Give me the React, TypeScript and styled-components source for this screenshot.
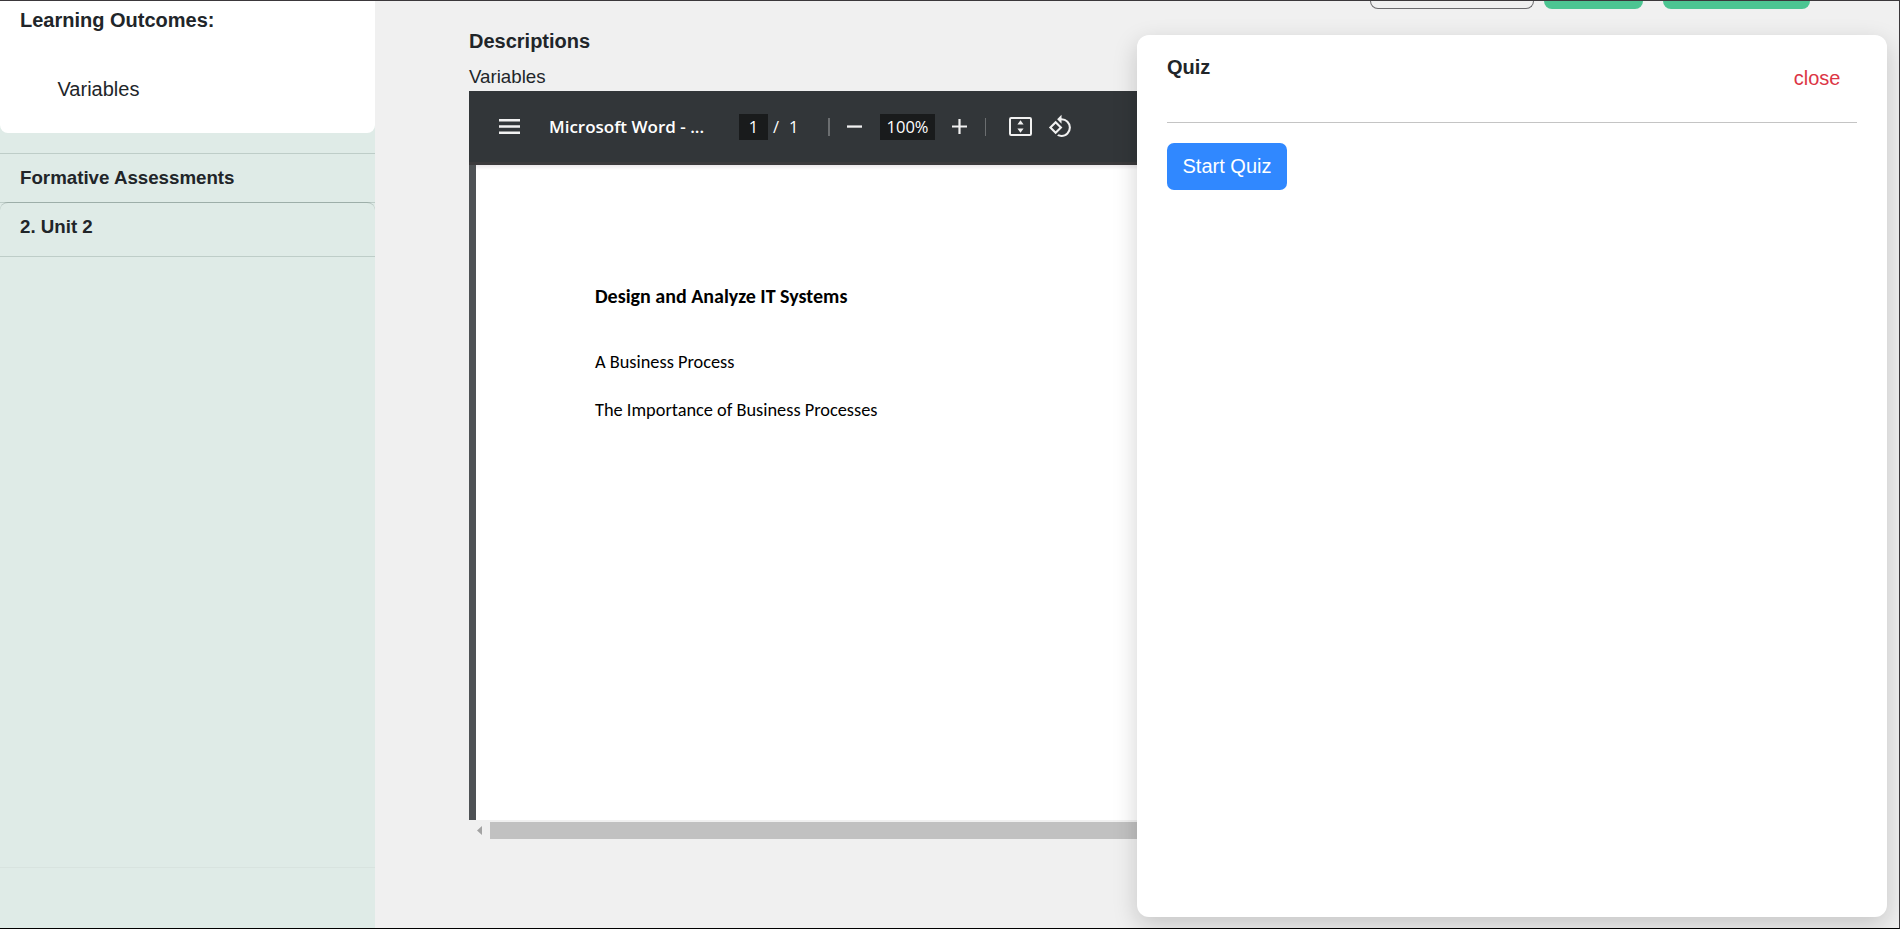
import React from "react";
import styled, { createGlobalStyle } from "styled-components";
import { MdRotate90DegreesCcw } from "react-icons/md";

const GlobalStyle = createGlobalStyle`
  *, *::before, *::after { box-sizing: border-box; }
  body {
    margin: 0;
    font-family: Arial, "Liberation Sans", sans-serif;
    font-size: 20px;
    line-height: 24px;
    color: #212529;
    background: #f0f0f0;
  }
  h1, h2, h3, p { margin: 0; }
`;

const Page = styled.div`
  position: relative;
  display: flex;
  width: 1900px;
  height: 929px;
  overflow: hidden;
  border-top: 1px solid #3b383b;
  border-right: 1px solid #3b383b;
  border-bottom: 1px solid #000;
  background: #f0f0f0;
`;

const Sidebar = styled.aside`
  flex: 0 0 375px;
  display: flex;
  flex-direction: column;
  background: #dfebe7;
`;

const OutcomesCard = styled.section`
  height: 132px;
  padding: 7px 20px 0;
  border-radius: 0 0 8px 8px;
  background: #fff;
`;

const OutcomesTitle = styled.h2`
  font-size: 20px;
  line-height: 24px;
`;

const Outcome = styled.p`
  margin: 45px 0 0 37.5px;
`;

const SectionTitle = styled.h3`
  font-size: 18.72px;
  line-height: 22px;
`;

const Assessments = styled.section`
  height: 50px;
  margin-top: 20px;
  padding: 13px 20px 0;
  border-top: 1px solid #becdc8;
  border-bottom: 1px solid #becdc8;
`;

const UnitCard = styled.section`
  height: 55px;
  margin-top: -1px;
  padding: 13px 20px 0;
  border-top: 1px solid rgba(60, 85, 75, 0.25);
  border-bottom: 1px solid #becdc8;
  border-radius: 8px 8px 0 0;
`;

const SidebarFooter = styled.div`
  height: 61px;
  margin-top: auto;
  border-top: 1px solid #d8e3df;
`;

const Main = styled.main`
  flex: 1;
  min-width: 0;
  padding-left: 94px;
`;

const ActionRow = styled.div`
  display: flex;
  height: 8px;
  margin-left: 901px;
`;

const OutlineField = styled.div`
  width: 164px;
  margin-right: 10px;
  border: 1px solid #6b6b6e;
  border-top: 0;
  border-radius: 0 0 8px 8px;
`;

const GreenButton = styled.div<{ $width: number }>`
  width: ${(p) => p.$width}px;
  margin-right: 20px;
  border-radius: 0 0 8px 8px;
  background: #4cc592;
`;

const DescriptionsTitle = styled.h2`
  margin-top: 20px;
  font-size: 20px;
  line-height: 24px;
`;

const DescriptionsText = styled.p`
  margin-top: 13px;
  padding-bottom: 3px;
  font-size: 18.72px;
  line-height: 22px;
`;

const Viewer = styled.div`
  width: 1000px;
`;

const Toolbar = styled.div`
  display: flex;
  align-items: center;
  height: 74px;
  padding-left: 30px;
  border-bottom: 3px solid #3b3a3c;
  background: #323639;
  color: #fff;
  font-family: "Segoe UI", "Open Sans", sans-serif;
  font-size: 16.5px;
  line-height: 26px;
  svg { flex: none; display: block; }
`;

const FileName = styled.span`
  width: 190px;
  margin-left: 29px;
  font-size: 17px;
  font-weight: 600;
  white-space: nowrap;
`;

const ValueBox = styled.span<{ $width: number }>`
  width: ${(p) => p.$width}px;
  height: 26px;
  line-height: 25px;
  text-align: center;
  background: #191b1c;
`;

const PageTotal = styled.span`
  display: flex;
  gap: 10px;
  width: 60px;
  padding-left: 5px;
  line-height: 25px;
`;

const Separator = styled.span<{ $width: number }>`
  width: ${(p) => p.$width}px;
  height: 18px;
  background: #6b6e70;
`;

const Gap = styled.span<{ $width: number }>`
  flex: 0 0 ${(p) => p.$width}px;
`;

const Sheet = styled.div`
  height: 655px;
  padding: 118px 0 0 119px;
  border-left: 7px solid #43474a;
  border-image: linear-gradient(to right, #4e5255, #383c3f) 1;
  border-top: 0;
  border-bottom: 0;
  border-right: 0;
  background: linear-gradient(#ebe8eb, #fff 5px);
  color: #000;
  font-family: Calibri, Carlito, Lato, sans-serif;
  font-size: 18.33px;
  line-height: 24px;
`;

const SheetTitle = styled.h1`
  font-size: 20px;
  line-height: 26px;
  margin-bottom: 41px;
`;

const SheetLine = styled.p`
  margin-bottom: 24px;
`;

const Scrollbar = styled.div`
  display: flex;
  align-items: center;
  height: 21px;
  padding-left: 8px;
  svg { display: block; }
`;

const Thumb = styled.div`
  flex: 1;
  height: 17px;
  margin-left: 8px;
  background: #c1c1c1;
`;

const QuizPanel = styled.section`
  position: absolute;
  top: 34px;
  left: 1137px;
  width: 750px;
  height: 882px;
  padding: 20px 30px;
  border-radius: 12px;
  background: #fff;
  box-shadow: 0 8px 24px rgba(0, 0, 0, 0.18);
`;

const QuizHeader = styled.header`
  display: flex;
  justify-content: space-between;
  height: 68px;
  border-bottom: 1px solid #c4c4c4;
`;

const QuizTitle = styled.h2`
  font-size: 20px;
  line-height: 24px;
`;

const CloseButton = styled.button`
  align-self: flex-start;
  margin: 11px 16.5px 0 0;
  padding: 0;
  border: 0;
  background: none;
  color: #dc3545;
  font: inherit;
`;

const StartButton = styled.button`
  width: 120px;
  height: 47px;
  margin-top: 20px;
  padding: 0 0 1px;
  border: 0;
  border-radius: 7px;
  background: #3088ff;
  color: #fff;
  font: inherit;
`;

function MenuIcon() {
  return (
    <svg width="21" height="15" viewBox="0 0 21 15" fill="#f1f1f1">
      <path d="M0 0h21v2.5H0zM0 6.25h21v2.5H0zM0 12.5h21V15H0z" />
    </svg>
  );
}

function MinusIcon() {
  return (
    <svg width="15" height="15" viewBox="0 0 15 15" fill="#f1f1f1">
      <path d="M0 6.4h15v2.3H0z" />
    </svg>
  );
}

function PlusIcon() {
  return (
    <svg width="15" height="15" viewBox="0 0 15 15" fill="#f1f1f1">
      <path d="M0 6.4h6.4V0h2.2v6.4H15v2.2H8.6V15H6.4V8.6H0z" />
    </svg>
  );
}

function FitIcon() {
  return (
    <svg width="23" height="19" viewBox="0 0 23 19" fill="#f1f1f1">
      <rect x="1" y="1" width="21" height="17" rx="1.2" fill="none" stroke="#f1f1f1" strokeWidth="2" />
      <path d="M11.5 3.2l3.1 4.3H8.4zM11.5 15.8l3.1-4.3H8.4z" />
    </svg>
  );
}

export default function App() {
  return (
    <>
      <GlobalStyle />
      <Page>
        <Sidebar>
          <OutcomesCard>
            <OutcomesTitle>Learning Outcomes:</OutcomesTitle>
            <Outcome>Variables</Outcome>
          </OutcomesCard>
          <Assessments>
            <SectionTitle>Formative Assessments</SectionTitle>
          </Assessments>
          <UnitCard>
            <SectionTitle>2. Unit 2</SectionTitle>
          </UnitCard>
          <SidebarFooter />
        </Sidebar>

        <Main>
          <ActionRow>
            <OutlineField />
            <GreenButton $width={99} />
            <GreenButton $width={147} />
          </ActionRow>
          <DescriptionsTitle>Descriptions</DescriptionsTitle>
          <DescriptionsText>Variables</DescriptionsText>
          <Viewer>
            <Toolbar>
              <MenuIcon />
              <FileName>Microsoft Word - ...</FileName>
              <ValueBox $width={29}>1</ValueBox>
              <PageTotal>
                <span>/</span>
                <span>1</span>
              </PageTotal>
              <Separator $width={2} />
              <Gap $width={17} />
              <MinusIcon />
              <Gap $width={18} />
              <ValueBox $width={55}>100%</ValueBox>
              <Gap $width={17} />
              <PlusIcon />
              <Gap $width={18} />
              <Separator $width={1} />
              <Gap $width={23} />
              <FitIcon />
              <Gap $width={16} />
              <MdRotate90DegreesCcw size={25} color="#f1f1f1" />
            </Toolbar>
            <Sheet>
              <SheetTitle>Design and Analyze IT Systems</SheetTitle>
              <SheetLine>A Business Process</SheetLine>
              <SheetLine>The Importance of Business Processes</SheetLine>
            </Sheet>
            <Scrollbar>
              <svg width="5" height="9" viewBox="0 0 5 9" fill="#a3a3a3">
                <path d="M5 0v9L0 4.5z" />
              </svg>
              <Thumb />
            </Scrollbar>
          </Viewer>
        </Main>

        <QuizPanel>
          <QuizHeader>
            <QuizTitle>Quiz</QuizTitle>
            <CloseButton>close</CloseButton>
          </QuizHeader>
          <StartButton>Start Quiz</StartButton>
        </QuizPanel>
      </Page>
    </>
  );
}
